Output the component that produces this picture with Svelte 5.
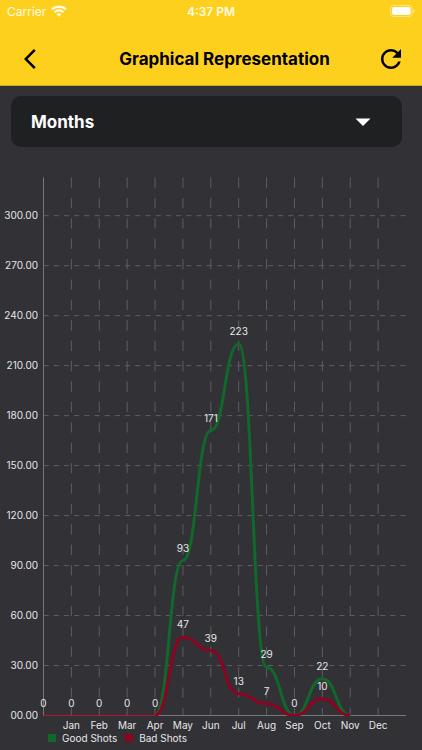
<script lang="ts">
	type Series = { name: string; color: string; values: number[] };

	const months = ['', 'Jan', 'Feb', 'Mar', 'Apr', 'May', 'Jun', 'Jul', 'Aug', 'Sep', 'Oct', 'Nov', 'Dec'];
	const ticks = [0, 30, 60, 90, 120, 150, 180, 210, 240, 270, 300];

	const series: Series[] = [
		{ name: 'Good Shots', color: '#10682a', values: [0, 0, 0, 0, 0, 93, 171, 223, 29, 0, 22, 0] },
		{ name: 'Bad Shots', color: '#8c0422', values: [0, 0, 0, 0, 0, 47, 39, 13, 7, 0, 10, 0] }
	];

	// plot area inside the svg viewBox
	const left = 43.5;
	const right = 406;
	const top = 30.5;
	const bottom = 568.5;
	const stepX = (right - left) / 13;
	const unitY = 1.666;

	// last of the leading empty months, the curves start here
	const first = series[0].values.findIndex((v) => v > 0) - 1;

	let period = $state('Months');

	function px(i: number) {
		return left + i * stepX;
	}

	function py(value: number) {
		return bottom - value * unitY;
	}

	function curve(values: number[]) {
		let d = `M${px(first)} ${py(values[first])}`;
		for (let i = first + 1; i < values.length; i++) {
			const mid = (px(i - 1) + px(i)) / 2;
			d += ` C${mid} ${py(values[i - 1])} ${mid} ${py(values[i])} ${px(i)} ${py(values[i])}`;
		}
		return d;
	}

	function tickLabel(value: number) {
		return value === 0 ? '00.00' : value.toFixed(2);
	}
</script>

<div class="page">
	<header>
		<div class="statusBar">
			<div class="carrier">
				<span>Carrier</span>
				<svg width="16" height="12" viewBox="0 0 16 12" fill="none" stroke="#fffbe6" stroke-width="2.2">
					<path d="M1 4.4a10 10 0 0 1 14 0" />
					<path d="M3.7 7.2a6.1 6.1 0 0 1 8.6 0" />
					<path d="M8 11.8L5.6 9.3a3.4 3.4 0 0 1 4.8 0z" fill="#fffbe6" stroke="none" />
				</svg>
			</div>
			<span class="time">4:37 PM</span>
			<div class="battery">
				<svg width="25" height="12" viewBox="0 0 25 12">
					<rect x="0.5" y="0.5" width="21.5" height="11" rx="3" fill="none" stroke="#fff" stroke-opacity="0.45" />
					<rect x="2" y="2" width="18.5" height="8" rx="1.8" fill="#fff" />
					<path d="M23.2 4v4c.8-.3 1.3-1.1 1.3-2s-.5-1.7-1.3-2z" fill="#fff" fill-opacity="0.5" />
				</svg>
			</div>
		</div>
		<div class="toolbar">
			<button class="back" aria-label="Back">
				<svg width="24" height="24" viewBox="0 0 24 24">
					<path d="M11.67 3.87L9.9 2.1 0 12l9.9 9.9 1.77-1.77L3.54 12z" />
				</svg>
			</button>
			<h1>Graphical Representation</h1>
			<button aria-label="Refresh">
				<svg width="30" height="30" viewBox="0 0 24 24">
					<path
						d="M17.65 6.35C16.2 4.9 14.21 4 12 4c-4.42 0-7.99 3.58-7.99 8s3.57 8 7.99 8c3.73 0 6.84-2.55 7.73-6h-2.08c-.82 2.33-3.04 4-5.65 4-3.31 0-6-2.69-6-6s2.69-6 6-6c1.66 0 3.14.69 4.22 1.78L13 11h7V4l-2.35 2.35z"
					/>
				</svg>
			</button>
		</div>
	</header>

	<main>
		<div class="selectWrap">
			<select bind:value={period} aria-label="Period">
				<option>Months</option>
				<option>Weeks</option>
				<option>Days</option>
			</select>
			<svg class="caret" width="16" height="8" viewBox="0 0 16 8">
				<path d="M0.5 0.5h15L8 8z" fill="#fff" />
			</svg>
		</div>

		<svg class="chart" viewBox="0 0 422 584" role="img" aria-label="Good and bad shots by month">
			<defs>
				<clipPath id="plot">
					<rect x={left} y={top} width={right - left} height={bottom - top + 0.5} />
				</clipPath>
			</defs>

			{#each ticks as tick}
				{#if tick > 0}
					<line class="gridX" x1={left} x2={right} y1={py(tick)} y2={py(tick)} />
				{/if}
				<text x="38" y={py(tick) + 3} text-anchor="end">{tickLabel(tick)}</text>
			{/each}

			{#each months as month, i}
				{#if i > 0}
					<line class="gridY" x1={px(i)} x2={px(i)} y1={top} y2={bottom} />
				{/if}
				<text x={px(i)} y="582" text-anchor="middle">{month}</text>
			{/each}

			<line class="axis" x1={left} x2={left} y1={top} y2={bottom} />
			<line class="axis" x1={left} x2={right} y1={bottom} y2={bottom} />
			<line class="empty" x1={left} x2={px(first)} y1={bottom} y2={bottom} />

			<g clip-path="url(#plot)">
				{#each series as s}
					<path class="curve" d={curve(s.values)} stroke={s.color} />
				{/each}
			</g>

			{#each series as s, n}
				{#each s.values.slice(0, -1) as value, i}
					<!-- zero labels of both series coincide, draw them once -->
					{#if value > 0 || n === 0}
						<text x={px(i)} y={py(value) - 9} text-anchor="middle">{value}</text>
					{/if}
				{/each}
			{/each}
		</svg>

		<ul class="legend">
			{#each series as s}
				<li><span class="swatch" style="background: {s.color}"></span>{s.name}</li>
			{/each}
		</ul>
	</main>
</div>

<style>
	:global(body) {
		margin: 0;
		background: #313136;
	}
	.page {
		font-family: Inter, 'Liberation Sans', sans-serif;
		min-height: 100vh;
		background: #313136;
		color: #fff;
	}
	header {
		background: #fed01e;
		border-bottom: 1px solid #c9a52a;
	}
	.statusBar {
		display: grid;
		grid-template-columns: 1fr auto 1fr;
		align-items: center;
		height: 22px;
		padding: 0 7px;
		font-size: 12px;
		color: #fffbe6;
	}
	.carrier {
		display: flex;
		align-items: center;
		gap: 5px;
	}
	.time {
		font-weight: 600;
	}
	.battery {
		display: flex;
		justify-content: flex-end;
	}
	.toolbar {
		display: flex;
		align-items: center;
		height: 63px;
		padding: 10px 16px 0 24px;
		box-sizing: border-box;
	}
	button {
		display: flex;
		padding: 0;
		border: none;
		background: none;
		color: #000;
		cursor: pointer;
	}
	.back {
		width: 49px;
	}
	h1 {
		flex: 1;
		margin: 0;
		font-size: 17px;
		font-weight: 700;
		text-align: center;
		white-space: nowrap;
		color: #000;
	}
	.selectWrap {
		position: relative;
		margin: 10px 20px 0 11px;
	}
	select {
		appearance: none;
		display: block;
		width: 100%;
		height: 51px;
		padding: 0 20px;
		border: none;
		border-radius: 10px;
		background: #1f2022;
		color: #fff;
		font-family: inherit;
		font-size: 17px;
		font-weight: 700;
	}
	.caret {
		position: absolute;
		top: 22px;
		right: 31px;
		pointer-events: none;
	}
	.chart {
		display: block;
		width: 100%;
	}
	text {
		font-size: 10px;
		fill: #e6e6e8;
	}
	.gridX,
	.gridY {
		stroke: #5e5e62;
		stroke-width: 1;
	}
	.gridX {
		stroke-dasharray: 5.1 5.1;
	}
	.gridY {
		stroke-dasharray: 10.2 10.2;
	}
	.axis {
		stroke: #77777a;
		stroke-width: 1;
	}
	.empty {
		stroke: #b8142f;
		stroke-width: 1;
	}
	.curve {
		fill: none;
		stroke-width: 3;
	}
	.legend {
		display: flex;
		gap: 8px;
		margin: 0;
		padding: 0 0 4px 48px;
		list-style: none;
		font-size: 10px;
		line-height: 14px;
		color: #e6e6e8;
	}
	.legend li {
		display: flex;
		align-items: center;
		gap: 6px;
	}
	.swatch {
		width: 8px;
		height: 8px;
	}
</style>
